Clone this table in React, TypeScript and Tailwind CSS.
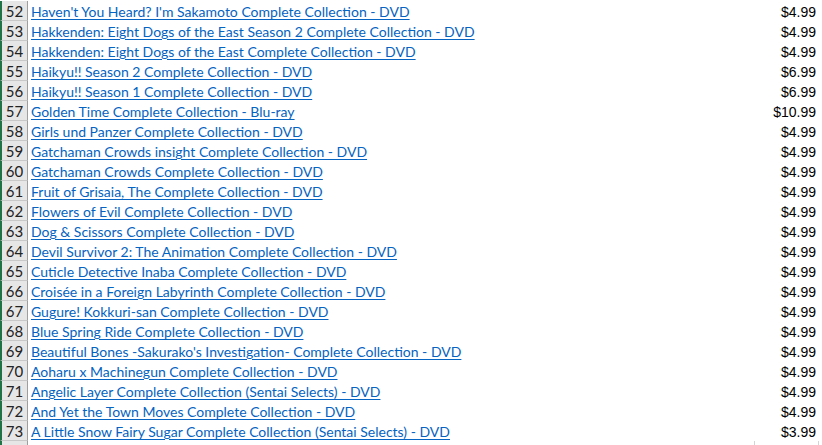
const ROWS: [number, string, string][] = [
  [52, "Haven't You Heard? I'm Sakamoto Complete Collection - DVD", "$4.99"],
  [53, "Hakkenden: Eight Dogs of the East Season 2 Complete Collection - DVD", "$4.99"],
  [54, "Hakkenden: Eight Dogs of the East Complete Collection - DVD", "$4.99"],
  [55, "Haikyu!! Season 2 Complete Collection - DVD", "$6.99"],
  [56, "Haikyu!! Season 1 Complete Collection - DVD", "$6.99"],
  [57, "Golden Time Complete Collection - Blu-ray", "$10.99"],
  [58, "Girls und Panzer Complete Collection - DVD", "$4.99"],
  [59, "Gatchaman Crowds insight Complete Collection - DVD", "$4.99"],
  [60, "Gatchaman Crowds Complete Collection - DVD", "$4.99"],
  [61, "Fruit of Grisaia, The Complete Collection - DVD", "$4.99"],
  [62, "Flowers of Evil Complete Collection - DVD", "$4.99"],
  [63, "Dog & Scissors Complete Collection - DVD", "$4.99"],
  [64, "Devil Survivor 2: The Animation Complete Collection - DVD", "$4.99"],
  [65, "Cuticle Detective Inaba Complete Collection - DVD", "$4.99"],
  [66, "Croisée in a Foreign Labyrinth Complete Collection - DVD", "$4.99"],
  [67, "Gugure! Kokkuri-san Complete Collection - DVD", "$4.99"],
  [68, "Blue Spring Ride Complete Collection - DVD", "$4.99"],
  [69, "Beautiful Bones -Sakurako's Investigation- Complete Collection - DVD", "$4.99"],
  [70, "Aoharu x Machinegun Complete Collection - DVD", "$4.99"],
  [71, "Angelic Layer Complete Collection (Sentai Selects) - DVD", "$4.99"],
  [72, "And Yet the Town Moves Complete Collection - DVD", "$4.99"],
  [73, "A Little Snow Fairy Sugar Complete Collection (Sentai Selects) - DVD", "$3.99"],
];

export default function App() {
  return (
    <div className="w-[822px] h-[445px] overflow-hidden bg-white pt-[1px]">
      {ROWS.map(([n, title, price]) => (
        <div key={n} className="flex h-[20px]">
          <div className="w-[28px] shrink-0 flex items-center justify-center pt-[2px] bg-[#e6e6e6] border-l-2 border-l-[#217346] border-r border-r-[#9e9e9e] border-b border-b-[#c8c8c8] font-['Lato',sans-serif] text-[15px] text-[#222]">
            {n}
          </div>
          <div className="flex-1 flex items-center pt-[2px] pl-[3px] font-['Lato',sans-serif] text-[14px] text-[#0563c1]">
            <a className="underline underline-offset-2 whitespace-nowrap leading-none">{title}</a>
          </div>
          <div className="w-[100px] shrink-0 flex items-center justify-end pt-[2px] pr-[6px] font-['Liberation_Sans',Arial,sans-serif] text-[14px] text-black">
            {price}
          </div>
        </div>
      ))}
      <div className="flex h-[20px]">
        <div className="w-[28px] shrink-0 bg-[#e6e6e6] border-l-2 border-l-[#217346] border-r border-r-[#9e9e9e]" />
        <div className="flex-1" />
        <div className="w-[64px] shrink-0 border-l border-l-[#d4d4d4]" />
        <div className="w-[4px] shrink-0 border-l border-l-[#d4d4d4]" />
      </div>
    </div>
  );
}
